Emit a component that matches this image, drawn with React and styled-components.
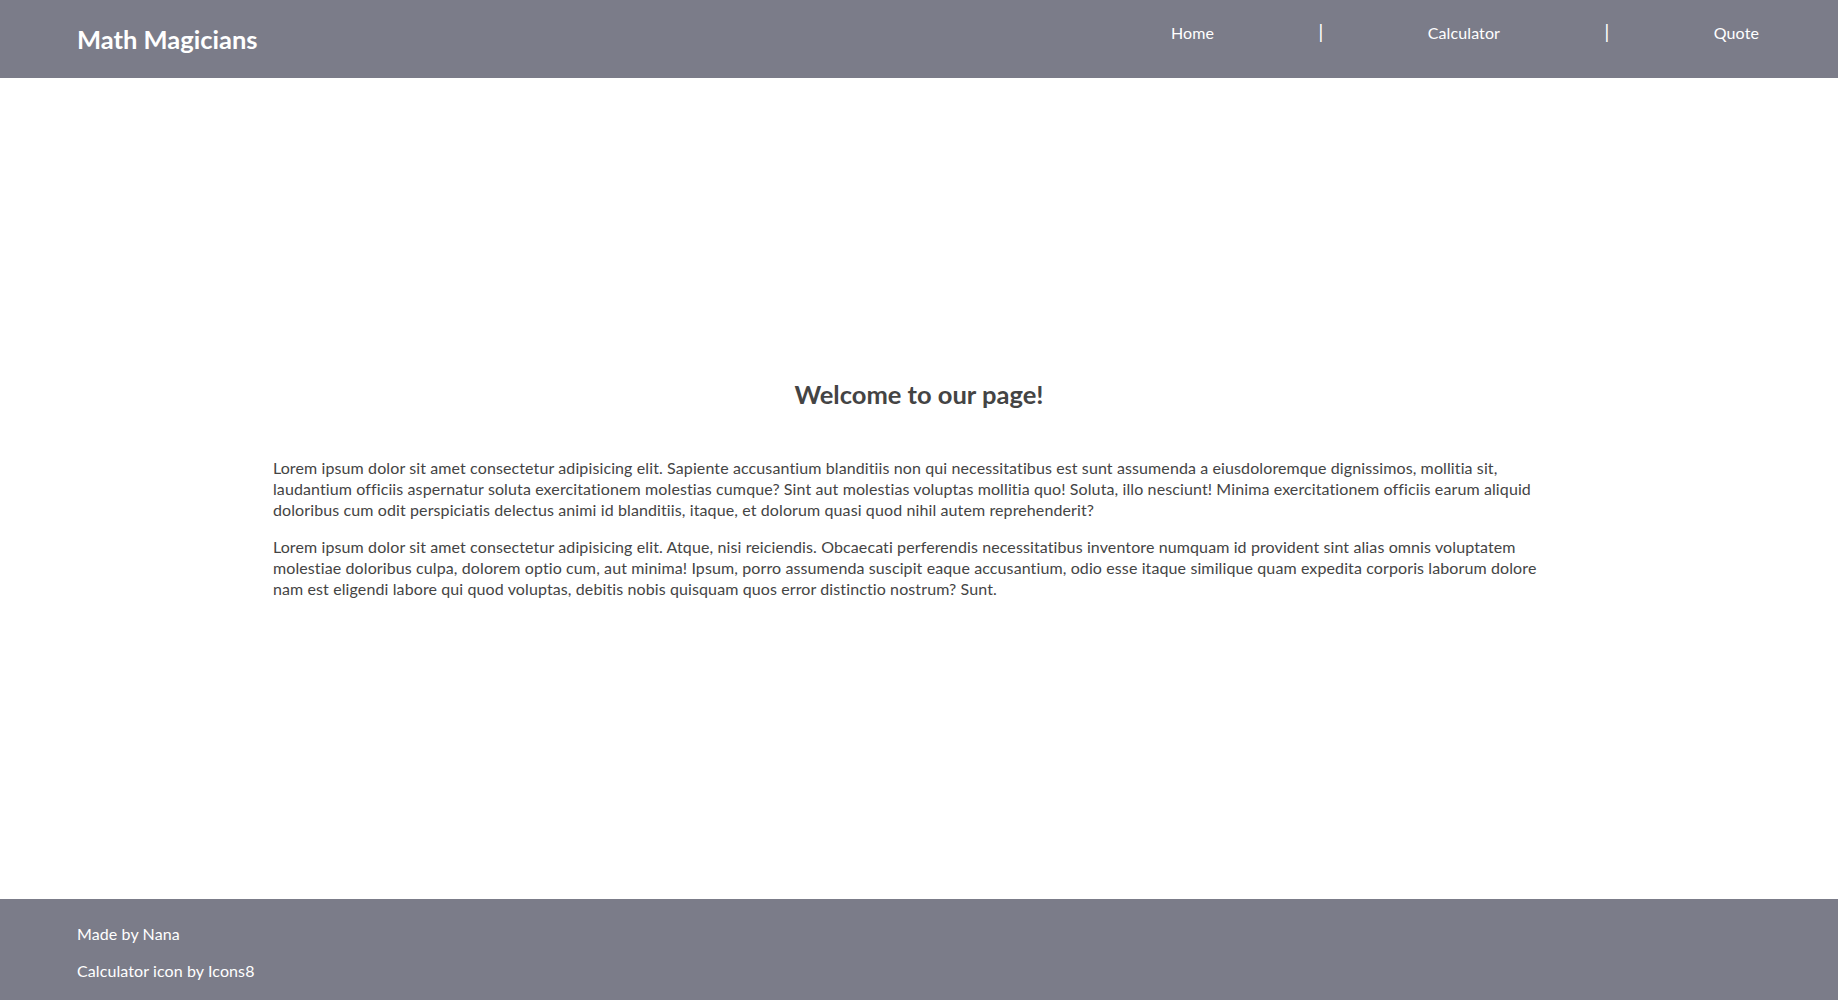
import React from "react";
import styled, { createGlobalStyle } from "styled-components";

const GlobalStyle = createGlobalStyle`
  * {
    box-sizing: border-box;
  }

  body {
    margin: 0;
    font-family: Lato, "Open Sans", sans-serif;
    background: #fff;
  }
`;

const Page = styled.div`
  min-height: 100vh;
  display: flex;
  flex-direction: column;
`;

const Header = styled.header`
  height: 78px;
  flex-shrink: 0;
  display: flex;
  justify-content: space-between;
  align-items: flex-start;
  padding: 0 79px 0 77px;
  background: #7b7c89;
  color: #fff;
`;

const Brand = styled.h1`
  margin: 0;
  padding-top: 22px;
  font-size: 25.5px;
  line-height: 34px;
  font-weight: 700;
`;

const Nav = styled.ul`
  display: flex;
  gap: 104px;
  margin: 0;
  padding: 22px 0 0;
  list-style: none;
  font-size: 16px;
  line-height: 21px;
  letter-spacing: 0.1px;
`;

const NavItem = styled.li`
  color: #fff;
  font-family: ${(p) => (p.$divider ? '"DejaVu Sans", sans-serif' : "inherit")};
  font-size: ${(p) => (p.$divider ? "17px" : "inherit")};
  cursor: ${(p) => (p.$divider ? "default" : "pointer")};
`;

const Main = styled.main`
  flex: 1;
  display: flex;
  flex-direction: column;
  justify-content: center;
  width: 70.3%;
  margin: 0 auto;
  color: #444;
`;

const Title = styled.h2`
  margin: 0 0 46px;
  text-align: center;
  font-size: 25.5px;
  line-height: 33px;
  font-weight: 700;
`;

const Text = styled.p`
  margin: 0 0 16px;
  font-size: 16px;
  line-height: 21px;
  letter-spacing: 0.11px;

  &:last-child {
    margin-bottom: 0;
  }
`;

const Footer = styled.footer`
  height: 101px;
  flex-shrink: 0;
  padding: 24px 77px 0;
  background: #7b7c89;
  color: #fff;
`;

const FooterLine = styled.p`
  margin: 0 0 16px;
  font-size: 16px;
  line-height: 21px;
  letter-spacing: 0.1px;
`;

const links = ["Home", "Calculator", "Quote"];

const App = () => {
  return (
    <>
      <GlobalStyle />
      <Page>
        <Header>
          <Brand>Math Magicians</Brand>
          <Nav>
            {links.map((link, i) => (
              <React.Fragment key={link}>
                {i > 0 && <NavItem $divider>|</NavItem>}
                <NavItem>{link}</NavItem>
              </React.Fragment>
            ))}
          </Nav>
        </Header>
        <Main>
          <Title>Welcome to our page!</Title>
          <Text>
            Lorem ipsum dolor sit amet consectetur adipisicing elit. Sapiente
            accusantium blanditiis non qui necessitatibus est sunt assumenda a
            eiusdoloremque dignissimos, mollitia sit, laudantium officiis
            aspernatur soluta exercitationem molestias cumque? Sint aut
            molestias voluptas mollitia quo! Soluta, illo nesciunt! Minima
            exercitationem officiis earum aliquid doloribus cum odit
            perspiciatis delectus animi id blanditiis, itaque, et dolorum quasi
            quod nihil autem reprehenderit?
          </Text>
          <Text>
            Lorem ipsum dolor sit amet consectetur adipisicing elit. Atque, nisi
            reiciendis. Obcaecati perferendis necessitatibus inventore numquam
            id provident sint alias omnis voluptatem molestiae doloribus culpa,
            dolorem optio cum, aut minima! Ipsum, porro assumenda suscipit eaque
            accusantium, odio esse itaque similique quam expedita corporis
            laborum dolore nam est eligendi labore qui quod voluptas, debitis
            nobis quisquam quos error distinctio nostrum? Sunt.
          </Text>
        </Main>
        <Footer>
          <FooterLine>Made by Nana</FooterLine>
          <FooterLine>Calculator icon by Icons8</FooterLine>
        </Footer>
      </Page>
    </>
  );
};

export default App;
